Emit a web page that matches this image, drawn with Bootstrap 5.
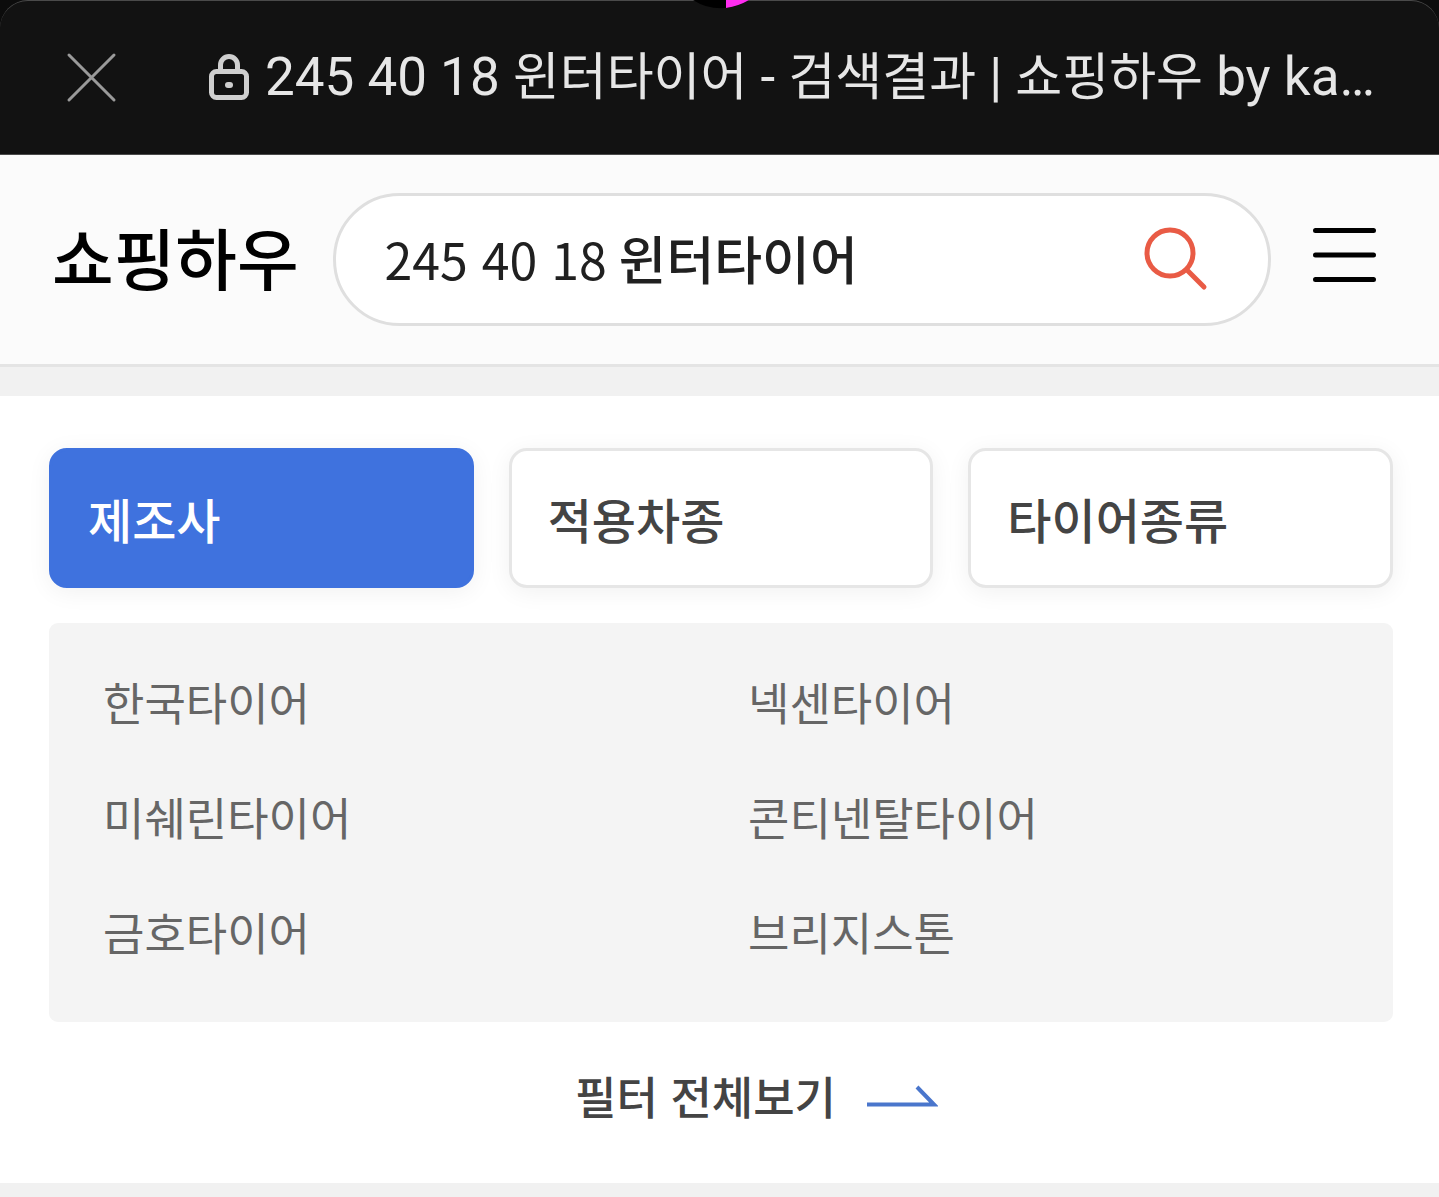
<!DOCTYPE html>
<html lang="ko">
<head>
<meta charset="utf-8">
<meta name="viewport" content="width=device-width, initial-scale=1">
<title>245 40 18 윈터타이어 - 검색결과 | 쇼핑하우</title>
<link rel="stylesheet" href="https://cdn.jsdelivr.net/npm/bootstrap@5.3.0/dist/css/bootstrap.min.css">
<style>
  body { background: #f1f1f1; font-family: "Noto Sans CJK KR", sans-serif; color: #444; }
  svg { display: block; flex: none; }
  .browser-top { background: #0c0c0c; }
  .browser-bar { background: #121212; height: 155px; padding: 0 64px; border: 1px solid #4a4a4a; border-width: 1px 0; border-radius: 28px 28px 0 0; }
  .camera-dot { top: 0; left: 50%; margin-left: -27px; }
  .page-title { font: 400 53px/72px Roboto, "Noto Sans CJK KR", sans-serif; color: #e6e6e6; margin-left: 16px; }
  .page-title span { font-size: 51px; }
  .site-head { background: #fbfbfb; height: 212px; padding: 0 60px 0 52px; border-bottom: 3px solid #e4e4e4; }
  .site-logo { font-size: 67px; line-height: 96px; font-weight: 500; color: #000; padding-bottom: 8px; }
  .menu-btn { padding-bottom: 10px; }
  .search-pill { height: 133px; margin: 0 39px 0 34px; padding: 0 60px 4px 49px; background: #fff; border: 3px solid #dfdfdf; border-radius: 67px; font-size: 52px; line-height: 80px; color: #202020; }
  .search-pill input { width: 234px; height: 80px; font-size: 50px; line-height: 80px; color: inherit; outline: 0; }
  .search-pill b { font-weight: 500; }
  .filter-area { background: #fff; margin-top: 29px; padding: 52px 46px 55px 49px; }
  .tab-row { gap: 35px; }
  .tab-btn { flex: 1 1 0; height: 140px; padding: 0 36px; font-size: 48px; line-height: 72px; font-weight: 500; text-align: left; color: #444; background: #fff; border: 3px solid #e6e6e6; border-radius: 18px; box-shadow: 0 4px 24px rgba(0,0,0,.06); }
  .tab-btn.active { background: #3f72de; border-color: #3f72de; color: #fff; }
  .maker-panel { margin-top: 35px; padding: 21px 0 33px 54px; background: #f4f4f4; border-radius: 9px; }
  .maker-panel a { font-size: 45px; line-height: 115px; color: #666; }
  .all-link { font-size: 45px; line-height: 64px; font-weight: 500; color: #444; gap: 31px; margin: 42px 0 0 71px; }
</style>
<script src="https://cdn.jsdelivr.net/npm/bootstrap@5.3.0/dist/js/bootstrap.bundle.min.js"></script>
</head>
<body>
<div class="browser-top position-relative overflow-hidden">
  <div class="browser-bar d-flex align-items-center">
    <button type="button" class="btn p-0 border-0" aria-label="닫기">
      <svg width="55" height="55" viewBox="0 0 55 55" fill="none" stroke="#9a9a9a" stroke-width="3" stroke-linecap="round"><path d="M5 5 50 50M50 5 5 50"/></svg>
    </button>
    <svg class="ms-auto" width="40" height="48" viewBox="0 0 40 48" fill="none" stroke="#cfcfcf" stroke-width="5"><rect x="2.500" y="17.500" width="35" height="26" rx="5"/><path d="M11.500 17v-6a8.500 8.500 0 0 1 17 0v6"/><rect x="16" y="28" width="8" height="6" rx="3" fill="#cfcfcf" stroke="none"/></svg>
    <div class="page-title text-nowrap">245 40 18 <span>윈터타이어</span> - <span>검색결과</span> | <span>쇼핑하우</span> by ka…</div>
  </div>
  <svg class="camera-dot position-absolute" width="56" height="9" viewBox="0 0 56 9"><path d="M0 0a51 51 0 0 0 56 0z" fill="#000"/><path d="M33 0v8Q46 6 56 0z" fill="#ff2df0"/></svg>
</div>

<header class="site-head d-flex align-items-center">
  <a class="site-logo text-decoration-none text-nowrap" href="#">쇼핑하우</a>
  <form class="search-pill d-flex align-items-center flex-grow-1" role="search">
    <input id="query" class="border-0 bg-transparent p-0" type="text" value="245 40 18" aria-label="검색어">
    <b>윈터타이어</b>
    <button type="submit" class="btn p-0 border-0 ms-auto" aria-label="검색">
      <svg width="64" height="68" viewBox="0 0 64 68" fill="none" stroke="#e95b45" stroke-width="5" stroke-linecap="round"><circle cx="26" cy="29" r="23"/><path d="M43 46 60 63"/></svg>
    </button>
  </form>
  <button type="button" class="menu-btn btn px-0 pt-0 border-0" aria-label="메뉴">
    <svg width="69" height="66" viewBox="0 0 69 66" stroke="#000" stroke-width="5" stroke-linecap="round"><path d="M5.500 8.500h58M5.500 33h58M5.500 57.500h58"/></svg>
  </button>
</header>

<main class="filter-area">
  <div class="tab-row d-flex">
    <button type="button" class="tab-btn active">제조사</button>
    <button type="button" class="tab-btn">적용차종</button>
    <button type="button" class="tab-btn">타이어종류</button>
  </div>
  <div class="maker-panel">
    <div class="row g-0">
      <div class="col-6"><a class="text-decoration-none d-block" href="#">한국타이어</a></div>
      <div class="col-6"><a class="text-decoration-none d-block" href="#">넥센타이어</a></div>
      <div class="col-6"><a class="text-decoration-none d-block" href="#">미쉐린타이어</a></div>
      <div class="col-6"><a class="text-decoration-none d-block" href="#">콘티넨탈타이어</a></div>
      <div class="col-6"><a class="text-decoration-none d-block" href="#">금호타이어</a></div>
      <div class="col-6"><a class="text-decoration-none d-block" href="#">브리지스톤</a></div>
    </div>
  </div>
  <a class="all-link d-flex justify-content-center align-items-center text-decoration-none" href="#">필터 전체보기
    <svg width="71" height="24" viewBox="0 0 71 24" fill="none" stroke="#4a76cc" stroke-width="4"><path d="M0 20.500h67L50 3"/></svg>
  </a>
</main>
</body>
</html>
